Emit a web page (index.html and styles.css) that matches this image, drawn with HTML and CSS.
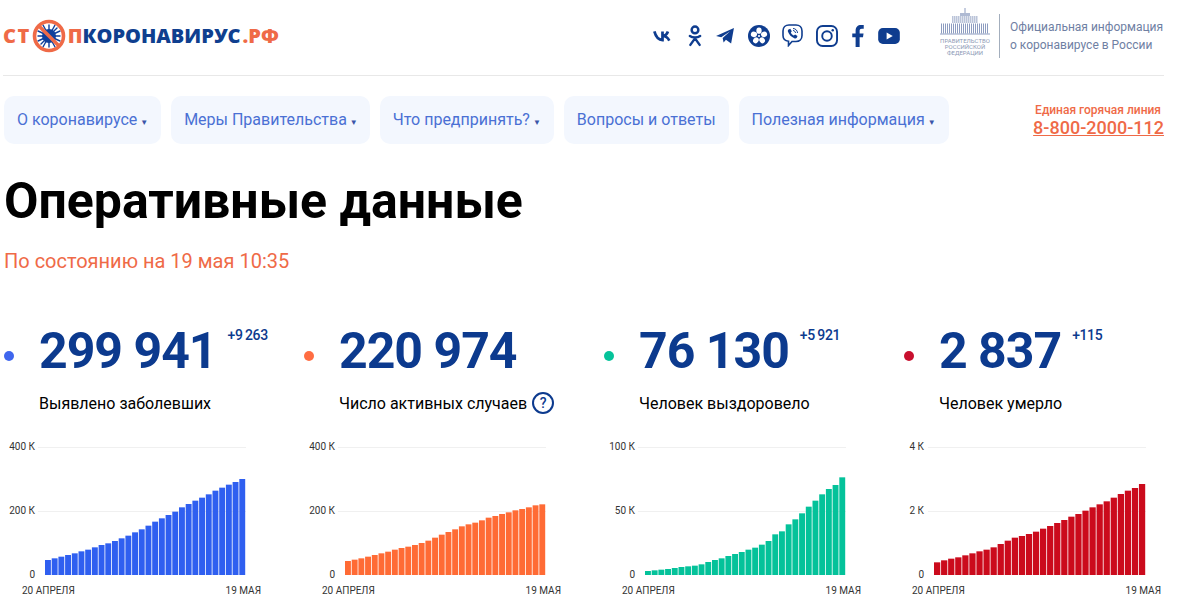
FILE: index.html
```html
<!DOCTYPE html>
<html lang="ru">
<head>
    <meta charset="UTF-8">
    <title>Оперативные данные</title>
    <link rel="stylesheet" href="styles.css">
</head>
<body>
    <header class="top">
        <a class="logo">
            <span class="orange logo-st">СТ</span>
            <svg class="logo-mark" viewBox="0 0 34 34">
                <g stroke="#0f3f9c" stroke-width="1.4" stroke-linecap="round">
                    <path d="M9 9l16 16M25 9L9 25M17 6v22M6 17h22M11 6l12 22M23 6L11 28M6 12l22 10M28 12L6 22"/>
                </g>
                <circle cx="17" cy="17" r="7" fill="#0f3f9c"/>
                <circle cx="17" cy="17" r="14.5" fill="none" stroke="#ef6a47" stroke-width="3.6"/>
                <path d="M7 7l20 20" stroke="#ef6a47" stroke-width="3.6"/>
            </svg>
            <span class="orange">П</span><span class="navy">КОРОНАВИРУС</span><span class="orange dom">.РФ</span>
        </a>
        <div class="socials">
            <svg class="ic" width="19" height="12" viewBox="0 0 21 13" fill="none" stroke="#0f3d8f" stroke-width="3">
                <path d="M1.5 1.5C3 7 6 11 10.5 11V1.5M10.5 6.500c3 0 5-2 6-5M10.5 6.500c3.500 0 6 2 7.500 5"/>
            </svg>
            <svg class="ic ic-ok" width="14" height="22" viewBox="0 0 15 23" fill="none" stroke="#0f3d8f" stroke-width="2.6" stroke-linecap="round">
                <circle cx="7.500" cy="5" r="3.600"/>
                <path d="M2 11.500c3 2 8 2 11 0M7.500 14L2.500 21M7.500 14l5 7"/>
            </svg>
            <svg class="ic" width="18" height="16" viewBox="0 0 19 17" fill="#0f3d8f">
                <path d="M0 8.500L19 0 16 16.500 10.500 12.500 8 15.500 7 10.500 15 3.500 5.500 9.800z"/>
            </svg>
            <svg class="ic" width="22" height="22" viewBox="0 0 24 24">
                <circle cx="12" cy="12" r="12" fill="#0f3d8f"/>
                <g fill="#fff">
                    <ellipse cx="12" cy="6.200" rx="2.900" ry="3.400"/>
                    <ellipse cx="12" cy="6.200" rx="2.900" ry="3.400" transform="rotate(72 12 12)"/>
                    <ellipse cx="12" cy="6.200" rx="2.900" ry="3.400" transform="rotate(144 12 12)"/>
                    <ellipse cx="12" cy="6.200" rx="2.900" ry="3.400" transform="rotate(216 12 12)"/>
                    <ellipse cx="12" cy="6.200" rx="2.900" ry="3.400" transform="rotate(288 12 12)"/>
                    <circle cx="12" cy="12" r="1.200"/>
                </g>
            </svg>
            <svg class="ic ic-viber" width="21" height="23" viewBox="0 0 21 23" fill="none" stroke="#0f3d8f">
                <path stroke-width="1.600" d="M7 1h7c3.500 0 6 2.500 6 6v4.500c0 3.500-2.500 6-6 6H10l-3.500 4v-4.200C3 16.800 1 14.800 1 11.500V7c0-3.500 2.500-6 6-6z"/>
                <path fill="#0f3d8f" stroke="none" d="M6.500 5.500l1.800-.7 1.500 2.400-1 1.300c.6 1.400 1.600 2.400 3 3l1.300-1 2.400 1.500-.7 1.800c-.6.800-1.600.9-2.500.5-3-1.300-5.200-3.500-6.300-6.500-.3-.9-.2-1.700.5-2.300z"/>
                <path stroke-width="1" d="M11 4.500c2.500 0 4.500 2 4.500 4.500M11 6.500c1.300 0 2.500 1.200 2.500 2.500"/>
            </svg>
            <svg class="ic ic-insta" width="22" height="22" viewBox="0 0 23 23" fill="none" stroke="#0f3d8f" stroke-width="2">
                <rect x="1" y="1" width="21" height="21" rx="6"/>
                <circle cx="11.500" cy="11.500" r="5"/>
                <circle cx="17.500" cy="5.500" r="1.300" fill="#0f3d8f" stroke="none"/>
            </svg>
            <svg class="ic" width="12" height="22" viewBox="0 0 12 23" fill="#0f3d8f">
                <path d="M3.500 23V12.800H0V8.800h3.500V6C3.500 2 5.800 0 9.200 0H12v3.800h-2c-1.700 0-2.300.8-2.300 2.300v2.700h4.100l-.6 4H7.700V23z"/>
            </svg>
            <svg class="ic" width="22" height="16" viewBox="0 0 23 17">
                <rect width="23" height="17" rx="5" fill="#0f3d8f"/>
                <path d="M9 4.800v7.400l6.500-3.700z" fill="#fff"/>
            </svg>
        </div>
        <div class="gov">
            <div class="gov-emblem">
                <svg width="50" height="27" viewBox="0 0 50 27" fill="none" stroke="#8d9cc0">
                    <path d="M25 0v5" stroke-width="1"/>
                    <path d="M20 6.500h10" stroke-width="3" opacity=".7"/>
                    <path d="M12 11.500h26" stroke-width="7" stroke-dasharray="1.500 .5" opacity=".6"/>
                    <path d="M1 20.500h48" stroke-width="10" stroke-dasharray="1 1"/>
                    <path d="M0 26h50" stroke-width="1"/>
                </svg>
                <span>ПРАВИТЕЛЬСТВО<br>РОССИЙСКОЙ<br>ФЕДЕРАЦИИ</span>
            </div>
            <div class="gov-line"></div>
            <p class="gov-text">Официальная информация<br>о коронавирусе в России</p>
        </div>
    </header>

    <nav class="menu">
        <ul class="menu-list">
            <li class="menu-item">О коронавирусе <i>▼</i></li>
            <li class="menu-item menu-item-tight">Меры Правительства <i>▼</i></li>
            <li class="menu-item">Что предпринять? <i>▼</i></li>
            <li class="menu-item">Вопросы и ответы</li>
            <li class="menu-item">Полезная информация <i>▼</i></li>
        </ul>
        <div class="hotline">
            <span>Единая горячая линия</span>
            <a>8-800-2000-112</a>
        </div>
    </nav>

    <h1 class="title">Оперативные данные</h1>
    <p class="updated">По состоянию на 19 мая 10:35</p>

    <main class="stats">
        <section class="stat">
            <div class="stat-head"><i class="dot blue"></i><b class="num">299 941</b><sup class="delta">+9 263</sup></div>
            <p class="label">Выявлено заболевших</p>
            <div class="chart" data-color="#2f5ff0" data-top="400 К" data-mid="200 К" data-values="45,50,55,60,65,71,76,83,90,95,102,110,118,128,137,148,160,170,180,190,203,213,223,232,242,253,262,271,279,288"></div>
        </section>
        <section class="stat">
            <div class="stat-head"><i class="dot orange-bg"></i><b class="num">220 974</b></div>
            <p class="label">Число активных случаев <span class="hint">?</span></p>
            <div class="chart" data-color="#ff6b35" data-top="400 К" data-mid="200 К" data-values="42,46,50,55,60,65,70,76,81,85,90,96,103,112,121,129,137,146,152,157,164,172,177,183,188,194,198,203,209,212"></div>
        </section>
        <section class="stat">
            <div class="stat-head"><i class="dot green"></i><b class="num">76 130</b><sup class="delta">+5 921</sup></div>
            <p class="label">Человек выздоровело</p>
            <div class="chart" data-color="#04c29a" data-top="100 К" data-mid="50 К" data-values="12,14,16,18,21,24,26,28,32,39,45,50,57,63,69,76,82,91,102,122,131,152,167,185,205,223,242,258,270,293"></div>
        </section>
        <section class="stat">
            <div class="stat-head"><i class="dot red"></i><b class="num">2 837</b><sup class="delta">+115</sup></div>
            <p class="label">Человек умерло</p>
            <div class="chart chart-wide" data-color="#cb0b1c" data-top="4 К" data-mid="2 К" data-values="38,44,49,53,59,65,71,76,83,93,103,112,117,123,130,139,147,156,165,175,183,193,203,212,221,232,243,253,261,273"></div>
        </section>
    </main>
    <script src="script.js"></script>
</body>
</html>
```

FILE: styles.css
```css
* {
    box-sizing: border-box;
}

body {
    margin: 0;
    padding: 0 27px 0 4px;
    height: 602px;
    overflow: hidden;
    background-color: #fff;
    font-family: Roboto, sans-serif;
    color: #000;
}

.top {
    display: flex;
    align-items: center;
    height: 76px;
    margin-left: -1px;
    padding: 0 0 4px 1px;
    border-bottom: 1px solid #e8e8e8;
}

.logo {
    display: flex;
    align-items: center;
    flex: none;
    width: 649px;
    font-family: "Open Sans", sans-serif;
    font-size: 20px;
    font-weight: 800;
}

.logo-st {
    margin-left: -1px;
    letter-spacing: 1.5px;
}

.logo-mark {
    width: 34px;
    height: 34px;
    margin: 0 2px 0 1px;
}

.orange {
    color: #ef6a47;
}

.navy {
    color: #0f3f8f;
}

.dom {
    margin-left: 2px;
}

.socials {
    display: flex;
    flex: none;
    align-items: center;
    gap: 14px;
    width: 287px;
}

.ic-ok {
    margin-left: 2px;
}

.ic-viber {
    margin-left: -2px;
}

.ic-insta {
    margin-left: -1px;
}

.gov {
    display: flex;
    flex: none;
    align-items: center;
}

.gov-emblem {
    display: flex;
    flex-direction: column;
    align-items: center;
    width: 50px;
    margin-bottom: 8px;
    font-size: 6px;
    line-height: 6px;
    text-align: center;
    color: #8d9ab5;
}

.gov-emblem span {
    margin-top: 3px;
}

.gov-line {
    width: 1px;
    height: 44px;
    margin: 0 10px 0 9px;
    background-color: #a3aebd;
}

.gov-text {
    margin: 0;
    font-size: 12px;
    line-height: 18px;
    white-space: nowrap;
    color: #6f80a3;
}

.menu {
    display: flex;
    justify-content: space-between;
    align-items: center;
    margin-top: 20px;
}

.menu-list {
    display: flex;
    gap: 10px;
    margin: 0;
    padding: 0;
    list-style: none;
}

.menu-item {
    height: 48px;
    padding: 0 13px;
    border-radius: 10px;
    background-color: #f3f7fe;
    font-size: 16px;
    line-height: 47px;
    color: #4a70d4;
    white-space: nowrap;
}

.menu-item-tight {
    padding-right: 12px;
}

.menu-item i {
    margin-left: -1px;
    font-size: 8px;
    font-style: normal;
    vertical-align: 0;
    color: #3a55a8;
}

.hotline {
    display: flex;
    flex-direction: column;
    align-items: flex-end;
    color: #ef6a47;
}

.hotline span {
    padding-right: 3px;
    font-size: 12px;
    font-weight: 500;
    line-height: 14px;
}

.hotline a {
    font-size: 18px;
    line-height: 21px;
    font-weight: 500;
    text-decoration: underline;
}

.title {
    margin: 31px 0 0;
    font-size: 50px;
    line-height: 52px;
    font-weight: 700;
}

.updated {
    margin: 22px 0 0;
    font-size: 20px;
    line-height: 24px;
    color: #ef6a47;
}

.stats {
    display: grid;
    grid-template-columns: repeat(4, 300px);
    margin-top: 48px;
}

.stat-head {
    display: flex;
    align-items: flex-start;
    height: 60px;
}

.dot {
    width: 10px;
    height: 10px;
    margin: 30px 25px 0 0;
    border-radius: 50%;
}

.blue {
    background-color: #3f66ee;
}

.orange-bg {
    background-color: #ff6d42;
}

.green {
    background-color: #05c39a;
}

.red {
    background-color: #c8102e;
}

.num {
    font-size: 50px;
    line-height: 60px;
    font-weight: 700;
    letter-spacing: -1px;
    color: #0c3a8e;
}

.delta {
    margin: 6px 0 0 11px;
    font-size: 14px;
    line-height: 16px;
    font-weight: 500;
    letter-spacing: -.4px;
    word-spacing: -.5px;
    color: #0c3a8e;
}

.label {
    display: flex;
    align-items: center;
    gap: 5px;
    height: 24px;
    margin: 10px 0 0 35px;
    font-size: 16px;
    font-weight: 400;
}

.hint {
    width: 22px;
    height: 22px;
    border: 2px solid #0c3a8e;
    border-radius: 50%;
    font-size: 14px;
    line-height: 18px;
    font-weight: 500;
    text-align: center;
    color: #0c3a8e;
}

.chart {
    position: relative;
    height: 150px;
    margin-top: 32px;
}

.grid-line {
    position: absolute;
    left: 34px;
    width: 208px;
    height: 1px;
    background-color: #f0f0f0;
}

.tick {
    position: absolute;
    right: 269px;
    font-size: 10px;
    line-height: 12px;
    color: #333;
}

.bars {
    position: absolute;
    left: 41px;
    top: 0;
    width: 201px;
    height: 128px;
}

.axis {
    position: absolute;
    top: 138px;
    left: 18px;
    width: 239px;
    display: flex;
    justify-content: space-between;
    font-size: 10px;
    line-height: 12px;
    color: #333;
}

.chart-wide .tick {
    right: 280px;
}

.chart-wide .grid-line {
    left: 24px;
    width: 218px;
}

.chart-wide .bars {
    left: 30px;
    width: 212px;
}

.chart-wide .axis {
    left: 8px;
    width: 249px;
}
```

FILE: script.js
```js
const charts = document.querySelectorAll(".chart");

charts.forEach((chart) => {
    const values = chart.dataset.values.split(",");
    const width = chart.classList.contains("chart-wide") ? 212 : 201;
    const pitch = width / values.length;
    const bars = values.map((v, i) => {
        // values were read off a 3x crop
        const h = v / 3;
        return `<rect x="${i * pitch}" y="${128 - h}" width="${pitch - 0.8}" height="${h}"/>`;
    }).join("");
    chart.innerHTML = `
        <span class="tick" style="top:-6px">${chart.dataset.top}</span>
        <span class="tick" style="top:58px">${chart.dataset.mid}</span>
        <span class="tick" style="top:122px">0</span>
        <div class="grid-line" style="top:0"></div>
        <div class="grid-line" style="top:64px"></div>
        <svg class="bars" viewBox="0 0 ${width} 128" fill="${chart.dataset.color}">${bars}</svg>
        <div class="axis"><span>20 АПРЕЛЯ</span><span>19 МАЯ</span></div>`;
});
```
